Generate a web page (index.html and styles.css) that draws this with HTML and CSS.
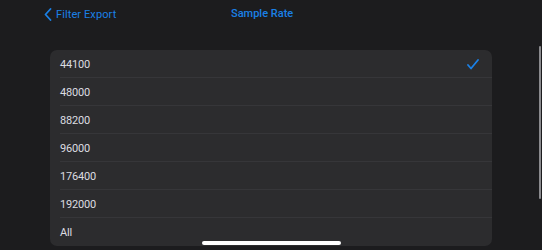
FILE: index.html
```html
<!DOCTYPE html>
<html lang="en">
<head>
    <meta charset="UTF-8">
    <meta name="viewport" content="width=device-width, initial-scale=1.0">
    <title>Sample Rate</title>
    <link rel="stylesheet" href="styles.css">
</head>
<body>
    <!-- Navigation bar -->
    <div class="navbar">
        <a class="back" href="#">
            <svg class="chevron" width="8" height="13" viewBox="0 0 8 13">
                <path d="M6.5 1 L1.5 6.5 L6.5 12" fill="none" stroke="#1a80e6" stroke-width="1.8" stroke-linecap="round" stroke-linejoin="round"/>
            </svg>
            <span>Filter Export</span>
        </a>
        <div class="title">Sample Rate</div>
    </div>

    <!-- Sample rate list -->
    <div class="content">
        <ul class="list">
            <li class="row selected">
                <span>44100</span>
                <svg class="check" width="12" height="11" viewBox="0 0 12 11">
                    <path d="M1 6 L4 9.5 L11 1" fill="none" stroke="#1a80e6" stroke-width="1.8" stroke-linecap="round" stroke-linejoin="round"/>
                </svg>
            </li>
            <li class="row"><span>48000</span></li>
            <li class="row"><span>88200</span></li>
            <li class="row"><span>96000</span></li>
            <li class="row"><span>176400</span></li>
            <li class="row"><span>192000</span></li>
            <li class="row"><span>All</span></li>
        </ul>
        <div class="scrollbar"></div>
    </div>

    <div class="home-indicator"></div>
</body>
</html>
```

FILE: styles.css
```css
body {
    margin: 0;
    width: 542px;
    height: 250px;
    overflow: hidden;
    background-color: #1c1c1e;
    font-family: Roboto, "Noto Sans", sans-serif;
    color: #dcdce0;
    position: relative;
}

.navbar {
    height: 28px;
    display: flex;
    align-items: center;
    position: relative;
}

.back {
    display: flex;
    align-items: center;
    gap: 4px;
    margin-left: 44px;
    color: #1a80e6;
    text-decoration: none;
    font-size: 11px;
    letter-spacing: 0.1px;
}

.chevron {
    display: block;
}

.title {
    position: absolute;
    left: 231px;
    top: 0;
    line-height: 28px;
    font-size: 11px;
    font-weight: 500;
    color: #1a80e6;
}

.content {
    padding: 22px 50px 0 50px;
    position: relative;
}

.list {
    list-style: none;
    margin: 0;
    padding: 0;
    background-color: #2c2c2e;
    border-radius: 7px;
    overflow: hidden;
}

.row {
    height: 28px;
    display: flex;
    align-items: center;
    justify-content: space-between;
    margin-left: 10px;
    padding-right: 13px;
    font-size: 11px;
    letter-spacing: -0.2px;
    box-shadow: inset 0 -1px 0 #363639;
}

.row:last-child {
    box-shadow: none;
}

.check {
    display: block;
}

.scrollbar {
    position: absolute;
    right: 1px;
    top: 18px;
    width: 2px;
    height: 153px;
    border-radius: 1px;
    background-color: #8a8a8e;
}

.home-indicator {
    position: absolute;
    left: 202px;
    top: 241px;
    width: 139px;
    height: 4px;
    border-radius: 2px;
    background-color: #ffffff;
}
```
